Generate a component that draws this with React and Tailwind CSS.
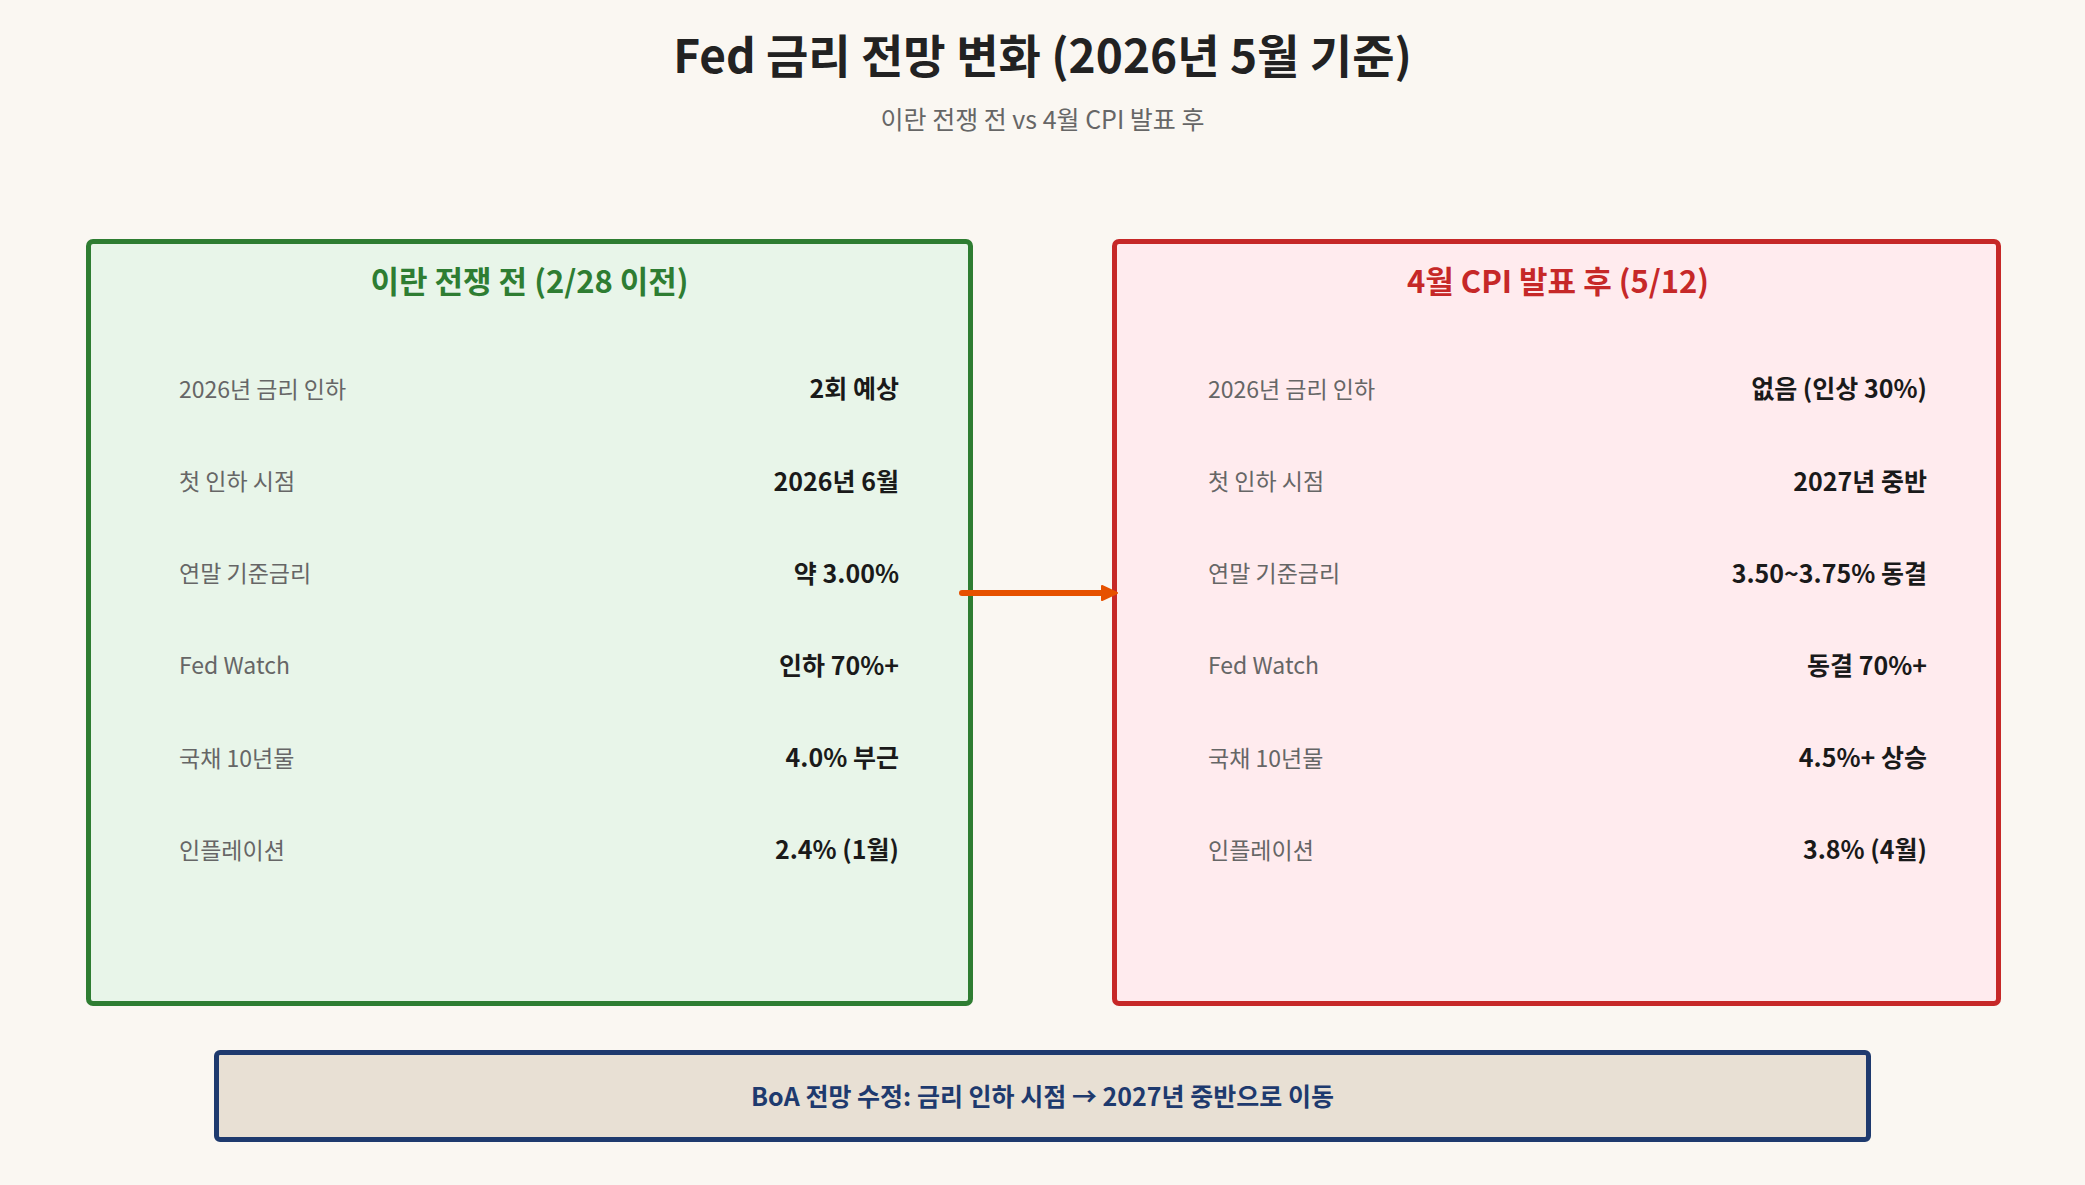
const font = { fontFamily: '"Noto Sans CJK KR", "Noto Sans", sans-serif' };

const before = [
  ["2026년 금리 인하", "2회 예상"],
  ["첫 인하 시점", "2026년 6월"],
  ["연말 기준금리", "약 3.00%"],
  ["Fed Watch", "인하 70%+"],
  ["국채 10년물", "4.0% 부근"],
  ["인플레이션", "2.4% (1월)"],
];

const after = [
  ["2026년 금리 인하", "없음 (인상 30%)"],
  ["첫 인하 시점", "2027년 중반"],
  ["연말 기준금리", "3.50~3.75% 동결"],
  ["Fed Watch", "동결 70%+"],
  ["국채 10년물", "4.5%+ 상승"],
  ["인플레이션", "3.8% (4월)"],
];

function Panel({ title, rows, tone }) {
  const box =
    tone === "green"
      ? "border-[#2e7d32] bg-[#e8f5e9] pl-[88px]"
      : "border-[#c62828] bg-[#ffebee] pl-[91px]";
  const head = tone === "green" ? "text-[#2e7d32]" : "text-[#c62828]";
  return (
    <section className={`h-[767px] rounded-[7px] border-[5px] pt-[16px] pr-[69px] ${box}`}>
      <h2 className={`text-center text-[31px] leading-[40px] font-bold -ml-[19px] ${head}`}>{title}</h2>
      <ul className="mt-[42px]">
        {rows.map(([label, value]) => (
          <li key={label} className="flex h-[92.2px] items-center justify-between">
            <span className="text-[23px] text-[#666666]">{label}</span>
            <span className="text-[25px] font-bold text-[#1a1a1a]">{value}</span>
          </li>
        ))}
      </ul>
    </section>
  );
}

export default function App() {
  return (
    <div className="w-[2085px] h-[1185px] bg-[#faf7f2] overflow-hidden" style={font}>
      <header className="pt-[25px] text-center">
        <h1 className="text-[46px] leading-[56px] font-bold text-[#222222]">
          Fed 금리 전망 변화 (2026년 5월 기준)
        </h1>
        <p className="mt-[21px] text-[25px] leading-[32px] text-[#666666]">
          이란 전쟁 전 vs 4월 CPI 발표 후
        </p>
      </header>

      <main className="relative mt-[105px] grid grid-cols-[887px_889px] gap-[139px] pl-[86px]">
        <Panel title="이란 전쟁 전 (2/28 이전)" rows={before} tone="green" />
        <Panel title="4월 CPI 발표 후 (5/12)" rows={after} tone="red" />
        {/* arrow between the two panels */}
        <svg
          className="absolute left-[959px] top-[344px]"
          width="160"
          height="20"
          viewBox="0 0 160 20"
        >
          <line x1="3" y1="10" x2="146" y2="10" stroke="#e65100" strokeWidth="6" strokeLinecap="round" />
          <path d="M143 3 L158 10 L143 17 Z" fill="#e65100" stroke="#e65100" strokeWidth="2" strokeLinejoin="round" />
        </svg>
      </main>

      <footer className="mx-[214px] mt-[44px] flex h-[92px] items-center justify-center rounded-[6px] border-[5px] border-[#1e3a6e] bg-[#e8e0d4]">
        <p className="text-[25px] font-bold text-[#1e3a6e]">
          BoA 전망 수정: 금리 인하 시점 → 2027년 중반으로 이동
        </p>
      </footer>
    </div>
  );
}
